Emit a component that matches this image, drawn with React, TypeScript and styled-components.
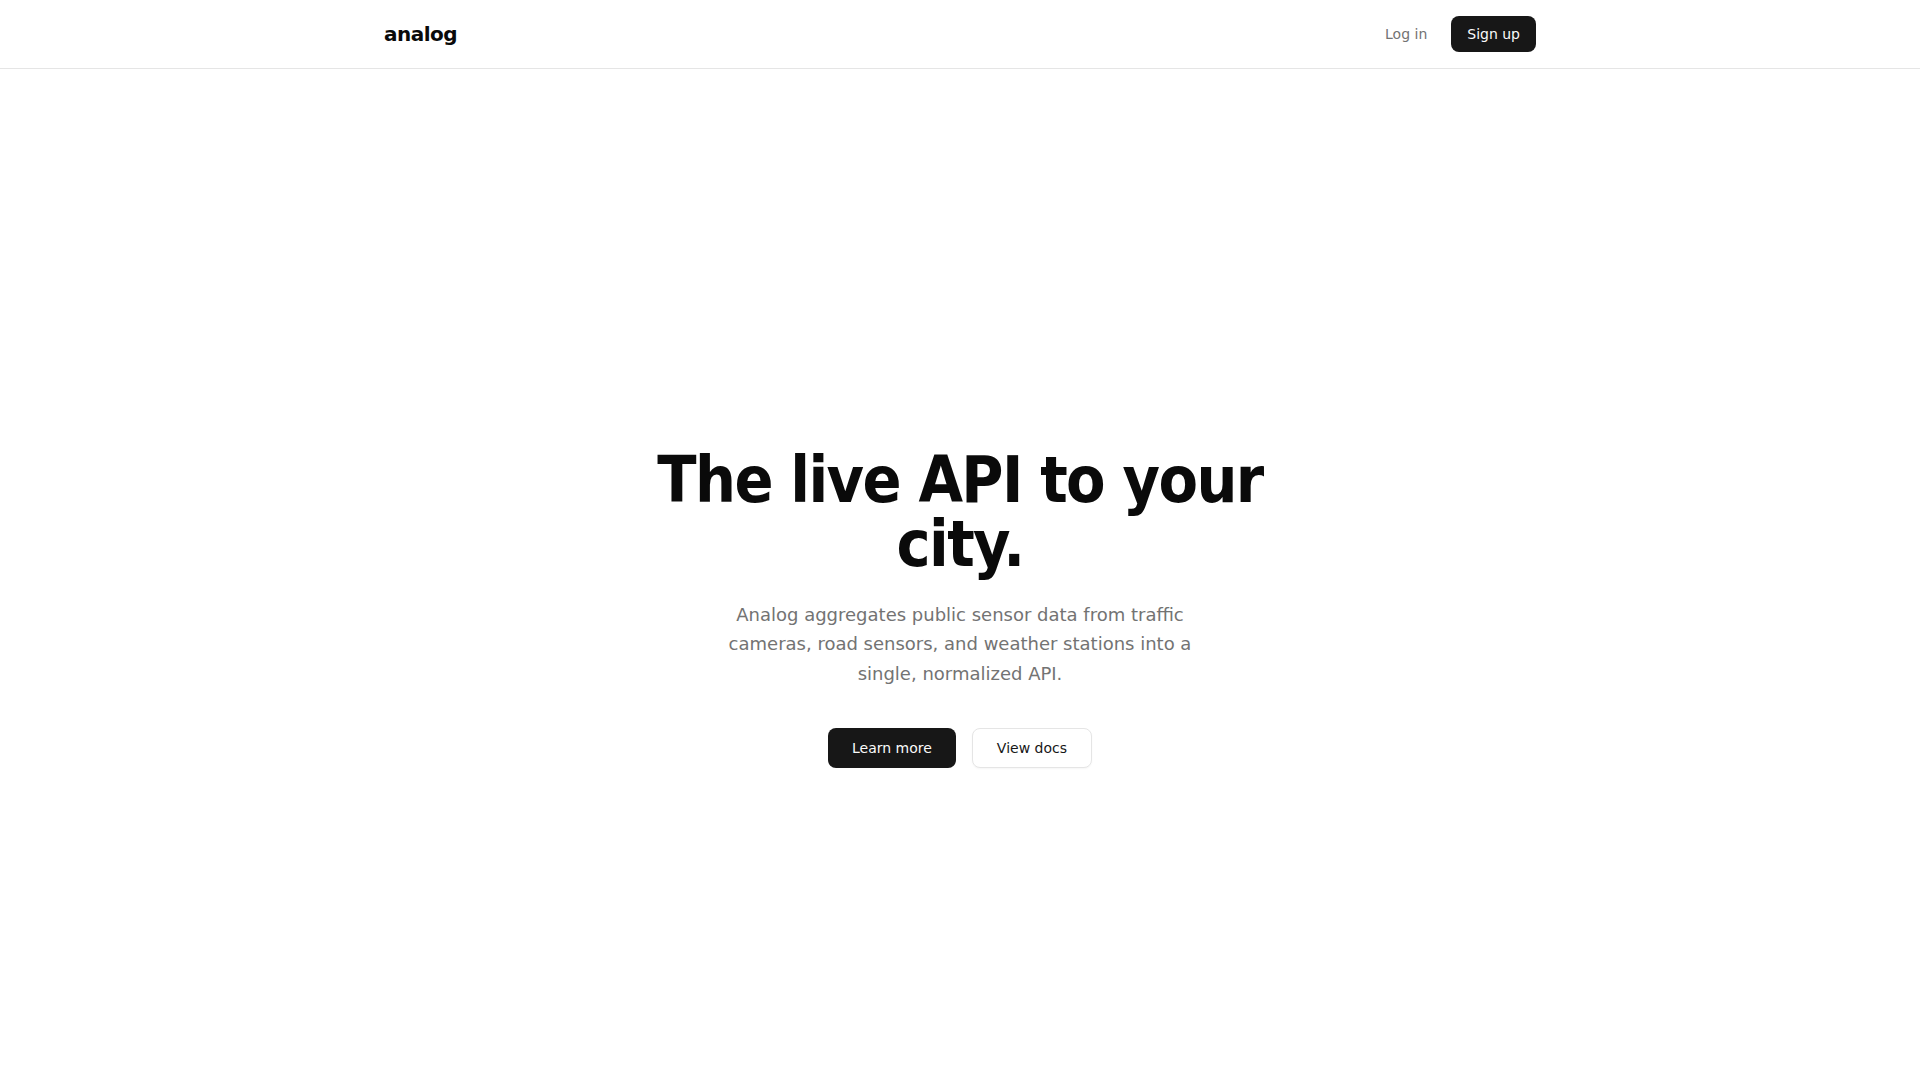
import React from "react";
import styled, { createGlobalStyle } from "styled-components";

const GlobalStyle = createGlobalStyle`
  * { box-sizing: border-box; }
  html, body { margin: 0; padding: 0; background: #ffffff; }
  body {
    font-family: "DejaVu Sans", Verdana, sans-serif;
    color: #0a0a0a;
    -webkit-font-smoothing: antialiased;
  }
`;

const Header = styled.header`
  border-bottom: 1px solid #e5e5e5;
  background: #ffffff;
`;

const HeaderInner = styled.div`
  max-width: 1152px;
  margin: 0 auto;
  padding: 16px 0;
  display: flex;
  align-items: center;
  justify-content: space-between;
`;

const Logo = styled.a`
  font-size: 20px;
  line-height: 28px;
  font-weight: 700;
  letter-spacing: -0.025em;
  color: #0a0a0a;
  text-decoration: none;
`;

const NavActions = styled.div`
  display: flex;
  align-items: center;
  gap: 12px;
`;

const TextLink = styled.a`
  font-size: 14px;
  line-height: 20px;
  color: #737373;
  text-decoration: none;
  padding: 8px 12px;
`;

const Button = styled.a<{ $variant?: "primary" | "outline"; $size?: "sm" | "md" }>`
  display: inline-flex;
  align-items: center;
  justify-content: center;
  font-size: 14px;
  line-height: 20px;
  text-decoration: none;
  border-radius: 8px;
  height: ${(p) => (p.$size === "sm" ? "36px" : "40px")};
  padding: 0 ${(p) => (p.$size === "sm" ? "16px" : "24px")};
  background: ${(p) => (p.$variant === "outline" ? "#ffffff" : "#171717")};
  color: ${(p) => (p.$variant === "outline" ? "#171717" : "#fafafa")};
  border: ${(p) => (p.$variant === "outline" ? "1px solid #e5e5e5" : "none")};
  box-shadow: ${(p) => (p.$variant === "outline" ? "0 1px 2px rgba(0,0,0,0.04)" : "none")};
`;

const Main = styled.main`
  min-height: calc(100vh - 2px);
  display: flex;
  align-items: center;
  justify-content: center;
`;

const Hero = styled.section`
  display: flex;
  flex-direction: column;
  align-items: center;
  text-align: center;
`;

const Title = styled.h1`
  margin: 0;
  max-width: 700px;
  font-family: "DejaVu Sans Condensed", "DejaVu Sans", sans-serif;
  font-stretch: semi-condensed;
  font-size: 64px;
  line-height: 64px;
  font-weight: 800;
  letter-spacing: -0.025em;
  color: #0a0a0a;
`;

const Lead = styled.p`
  margin: 24px 0 0;
  max-width: 500px;
  font-size: 18px;
  line-height: 29.25px;
  color: #737373;
`;

const Actions = styled.div`
  margin-top: 40px;
  display: flex;
  gap: 16px;
`;

export default function App() {
  return (
    <>
      <GlobalStyle />
      <Header>
        <HeaderInner>
          <Logo href="#">analog</Logo>
          <NavActions>
            <TextLink href="#">Log in</TextLink>
            <Button href="#" $size="sm">Sign up</Button>
          </NavActions>
        </HeaderInner>
      </Header>
      <Main>
        <Hero>
          <Title>The live API to your city.</Title>
          <Lead>
            Analog aggregates public sensor data from traffic cameras, road
            sensors, and weather stations into a single, normalized API.
          </Lead>
          <Actions>
            <Button href="#">Learn more</Button>
            <Button href="#" $variant="outline">View docs</Button>
          </Actions>
        </Hero>
      </Main>
    </>
  );
}
